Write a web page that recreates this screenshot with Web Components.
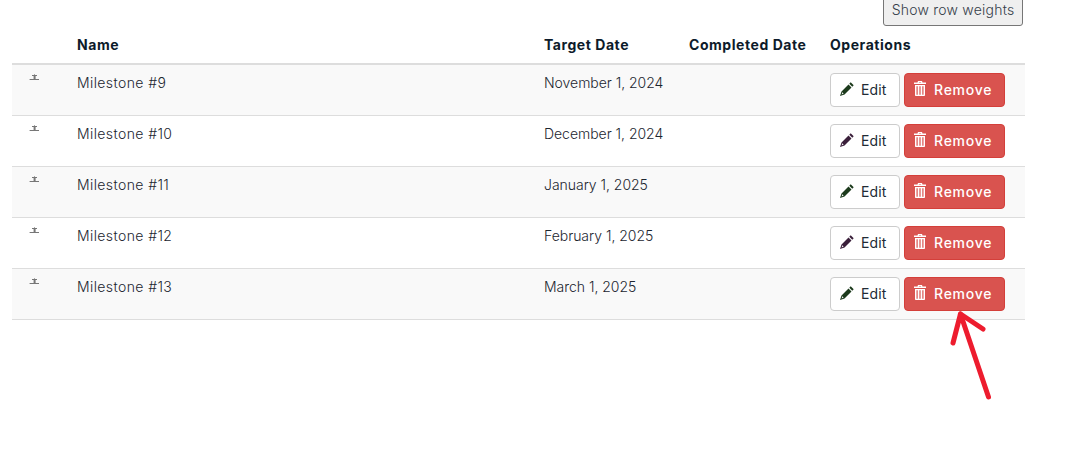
<!DOCTYPE html>
<html lang="en">
<head>
<meta charset="utf-8">
<title>Milestones</title>
<style>
  html, body { margin: 0; padding: 0; background: #fff; overflow: hidden; }
  body { font-family: Inter, "Liberation Sans", sans-serif; height: 459px; position: relative; }
</style>
</head>
<body>

<template id="action-button-tpl">
  <style>
    :host { display: inline-flex; }
    .btn {
      display: inline-flex;
      align-items: center;
      box-sizing: border-box;
      width: 70px;
      height: 34px;
      padding: 0 0 2px 9px;
      gap: 7px;
      border-radius: 4px;
      border: 1px solid #ccc;
      background: #fff;
      color: #212b36;
      font: 400 14px Inter, "Liberation Sans", sans-serif;
      letter-spacing: .1px;
      white-space: nowrap;
    }
    :host([variant="danger"]) .btn {
      width: 101px;
      background: #d9534f;
      border-color: #d43f3a;
      color: #fff;
      font-weight: 500;
      letter-spacing: .75px;
    }
  </style>
  <span class="btn"><slot name="icon"></slot><slot></slot></span>
</template>

<template id="milestone-table-tpl">
  <style>
    :host { display: block; margin: 0 52px 0 12px; }
    .toolbar { display: flex; justify-content: flex-end; height: 25px; padding-right: 2px; }
    .toolbar button {
      box-sizing: border-box;
      width: 140px;
      height: 35px;
      margin-top: -9px;
      padding: 1px 0 0;
      border: 1px solid #767676;
      border-radius: 3px;
      background: #efefef;
      color: #36404a;
      font: 300 14px Inter, "Liberation Sans", sans-serif;
      letter-spacing: .22px;
      white-space: nowrap;
    }
    .head {
      display: grid;
      grid-template-columns: 53px 467px 145px 141px 207px;
      height: 38px;
      border-bottom: 2px solid #ddd;
      box-sizing: content-box;
      align-items: center;
      font: 700 14px Inter, "Liberation Sans", sans-serif;
      letter-spacing: .55px;
      color: #0d1b2a;
    }
    .head span { padding-left: 12px; white-space: nowrap; }
  </style>
  <div class="toolbar"><button type="button">Show row weights</button></div>
  <div class="head"><span></span><span>Name</span><span>Target Date</span><span>Completed Date</span><span>Operations</span></div>
  <slot></slot>
</template>

<template id="milestone-row-tpl">
  <style>
    :host { display: block; --pencil: #3a1f3a; }
    :host([striped]) { --pencil: #1c3a1c; }
    .row {
      display: grid;
      grid-template-columns: 53px 467px 145px 141px 207px;
      height: 50px;
      border-bottom: 1px solid #ddd;
      background: #fff;
      color: #1c2630;
      font: 300 14px Inter, "Liberation Sans", sans-serif;
    }
    :host([striped]) .row { background: #f9f9f9; }
    .cell { padding: 9px 12px 0; line-height: 18px; white-space: nowrap; }
    #name { letter-spacing: .4px; }
    #target { letter-spacing: -.03px; }
    .drag { padding: 9px 0 0 16px; line-height: 0; }
    .drag svg { display: block; width: 12px; height: 8px; }
    .ops { display: flex; gap: 4px; padding: 8px 0 0 12px; }
    .pencil { display: block; width: 14px; height: 14px; fill: var(--pencil); }
    .trash { display: block; width: 12px; height: 15px; fill: #fff; margin: -1px 1px 0 0; }
  </style>
  <div class="row">
    <div class="drag">
      <svg viewBox="0 0 12 8">
        <path fill="#777" d="M4 1h5v1H7.600v3H11v1H1.600V5H5.600V2H4z"/>
        <path fill="#aaa" d="M6 0h1v1H6z"/>
      </svg>
    </div>
    <div class="cell" id="name"></div>
    <div class="cell" id="target"></div>
    <div class="cell"></div>
    <div class="ops">
      <action-button>
        <svg slot="icon" class="pencil" viewBox="0 0 14 14"><path d="M10.700 0.300l3 3-1.400 1.400-3-3zM8.500 2.500l3 3-7 7L0 14l1.500-4.500zM2.400 10.200L1.600 12.400l2-.8z"/></svg>
        Edit
      </action-button>
      <action-button variant="danger">
        <svg slot="icon" class="trash" viewBox="0 0 12 15"><path d="M4 0h4l.5 1.500H12V3H0V1.500h3.500zM5 .9l-.2.6h2.400L7 .9zM1 4h10v10c0 .6-.4 1-1 1H2c-.6 0-1-.4-1-1zm1.500 1.200v8.600h1.200V5.200zm2.900 0v8.600h1.200V5.200zm2.900 0v8.600h1.200V5.200z"/></svg>
        Remove
      </action-button>
    </div>
  </div>
</template>

<milestone-table>
  <milestone-row name="Milestone #9" target="November 1, 2024" striped></milestone-row>
  <milestone-row name="Milestone #10" target="December 1, 2024"></milestone-row>
  <milestone-row name="Milestone #11" target="January 1, 2025" striped></milestone-row>
  <milestone-row name="Milestone #12" target="February 1, 2025"></milestone-row>
  <milestone-row name="Milestone #13" target="March 1, 2025" striped></milestone-row>
</milestone-table>

<annotation-arrow></annotation-arrow>

<script>
  const fromTemplate = (el, id) => {
    const root = el.attachShadow({ mode: 'open' });
    root.appendChild(document.getElementById(id).content.cloneNode(true));
    return root;
  };

  class ActionButton extends HTMLElement {
    constructor() {
      super();
      fromTemplate(this, 'action-button-tpl');
    }
  }

  class MilestoneTable extends HTMLElement {
    constructor() {
      super();
      fromTemplate(this, 'milestone-table-tpl');
    }
  }

  class MilestoneRow extends HTMLElement {
    constructor() {
      super();
      fromTemplate(this, 'milestone-row-tpl');
    }

    connectedCallback() {
      this.shadowRoot.getElementById('name').textContent = this.getAttribute('name') || '';
      this.shadowRoot.getElementById('target').textContent = this.getAttribute('target') || '';
    }
  }

  // Red hand-drawn arrow lying over the page
  class AnnotationArrow extends HTMLElement {
    constructor() {
      super();
      this.attachShadow({ mode: 'open' }).innerHTML = `
        <style>
          :host { position: absolute; left: 940px; top: 300px; width: 60px; height: 110px; }
          svg { display: block; }
        </style>
        <svg width="60" height="110" viewBox="940 300 60 110" fill="none" stroke="#ed1c2e"
             stroke-width="5" stroke-linecap="round" stroke-linejoin="round">
          <path d="M988.500 397 L960.500 314 L953 343"/>
          <path d="M960.500 314 L983 329"/>
        </svg>`;
    }
  }

  customElements.define('action-button', ActionButton);
  customElements.define('milestone-table', MilestoneTable);
  customElements.define('milestone-row', MilestoneRow);
  customElements.define('annotation-arrow', AnnotationArrow);
</script>
</body>
</html>
